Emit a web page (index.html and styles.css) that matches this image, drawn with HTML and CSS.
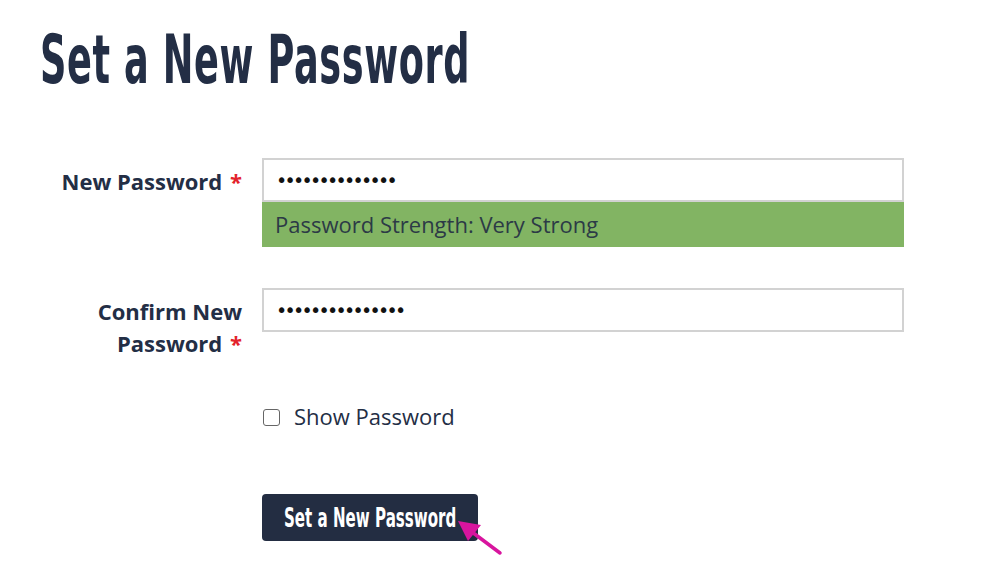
FILE: index.html
```html
<!DOCTYPE html>
<html>
<head>
<meta charset="utf-8">
<link rel="stylesheet" href="styles.css">
</head>
<body>
<div class="page">
  <h1 class="title"><span>Set a New Password</span></h1>
  <form class="form">
    <div class="row">
      <label class="label">New Password <span class="req">*</span></label>
      <div class="field">
        <input class="input" type="password" value="abcdefghijklmn">
        <div class="strength">Password Strength: Very Strong</div>
      </div>
    </div>
    <div class="row row-confirm">
      <label class="label">Confirm New<br>Password <span class="req">*</span></label>
      <div class="field">
        <input class="input" type="password" value="abcdefghijklmno">
      </div>
    </div>
    <div class="row row-check">
      <div></div>
      <label class="check"><span class="box"></span>Show Password</label>
    </div>
    <div class="row row-btn">
      <div></div>
      <div class="btn-wrap">
        <button type="button" class="btn"><span>Set a New Password</span></button>
        <svg class="arrow" width="50" height="50" viewBox="0 0 50 50">
          <line x1="44" y1="43" x2="16" y2="22" stroke="#d8159e" stroke-width="3.5" stroke-linecap="round"/>
          <polygon points="2,11 12,31 25,15" fill="#d8159e"/>
        </svg>
      </div>
    </div>
  </form>
</div>
</body>
</html>
```
FILE: styles.css
```css
* { box-sizing: border-box; }
html, body { margin: 0; padding: 0; background: #fff; }
body { font-family: "Open Sans", "Noto Sans", sans-serif; color: #232e45; }
.page { width: 1000px; height: 578px; overflow: hidden; padding-top: 22px; }
.title {
  margin: 0 0 0 40px;
  font-family: "DejaVu Sans Condensed", "DejaVu Sans", sans-serif;
  font-weight: bold;
  font-size: 68px;
  line-height: 76px;
  color: #232e45;
  white-space: nowrap;
}
.title span { display: inline-block; transform: scaleX(0.6); transform-origin: left center; letter-spacing: 1px; }
.form { margin-top: 60px; }
.row { display: grid; grid-template-columns: 242px 642px; column-gap: 20px; }
.label {
  text-align: right;
  font-weight: 700;
  font-size: 22px;
  line-height: 32px;
  padding-top: 7px;
  color: #232e45;
}
.req { color: #e3232b; margin-left: 2px; }
.field { display: flex; flex-direction: column; }
.input {
  height: 44px;
  border: 2px solid #d2d2d2;
  border-radius: 0;
  padding: 0 12px;
  font-size: 19px;
  font-family: "DejaVu Sans", sans-serif;
  letter-spacing: -2.7px;
  color: #111;
  outline: none;
  background: #fff;
}
.strength {
  height: 45px;
  background: #82b463;
  font-size: 22px;
  line-height: 45px;
  padding-left: 13px;
  color: #2c3a46;
}
.row-confirm { margin-top: 41px; }
.row-check { margin-top: 42px; }
.check {
  display: flex;
  align-items: center;
  font-size: 22px;
  line-height: 30px;
  color: #232e45;
}
.box {
  width: 17px;
  height: 17px;
  border: 1.5px solid #666;
  border-radius: 3px;
  margin: 3px 14px 0 1px;
}
.row-btn { margin-top: 63px; }
.btn-wrap { position: relative; }
.btn {
  width: 216px;
  height: 47px;
  background: #232d42;
  border: none;
  border-radius: 4px;
  color: #fff;
  font-family: "DejaVu Sans Condensed", "DejaVu Sans", sans-serif;
  font-weight: bold;
  font-size: 26px;
  padding: 0;
  text-align: left;
  padding-left: 22px;
  white-space: nowrap;
}
.btn span { display: inline-block; transform: scaleX(0.645); transform-origin: left center; }
.arrow { position: absolute; left: 194px; top: 16px; }
```
